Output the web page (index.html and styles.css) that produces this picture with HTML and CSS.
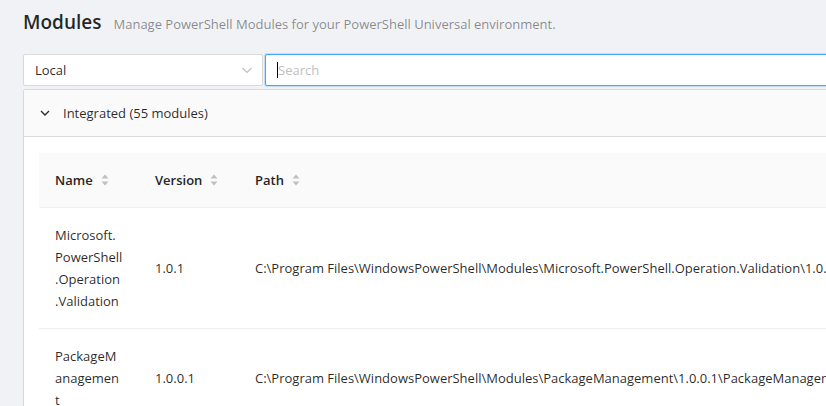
FILE: index.html
```html
<!DOCTYPE html>
<html>
<head>
<meta charset="utf-8">
<link rel="stylesheet" href="styles.css">
</head>
<body>
<div class="page">
  <div class="heading">
    <h1 class="title">Modules</h1>
    <span class="subtitle">Manage PowerShell Modules for your PowerShell Universal environment.</span>
  </div>
  <div class="toolbar">
    <div class="select">
      <span class="select-value">Local</span>
      <svg class="select-arrow" width="12" height="12" viewBox="0 0 12 12"><path d="M1.5 4 L6 8.5 L10.5 4" fill="none" stroke="#bfbfbf" stroke-width="1.1"/></svg>
    </div>
    <div class="search">
      <span class="caret"></span><span class="placeholder">Search</span>
    </div>
  </div>
  <div class="collapse">
    <div class="collapse-header">
      <svg class="collapse-arrow" width="12" height="12" viewBox="0 0 12 12"><path d="M2 4 L6 8 L10 4" fill="none" stroke="#262626" stroke-width="1.3"/></svg>
      <span>Integrated (55 modules)</span>
    </div>
    <div class="collapse-body">
      <table class="table">
        <thead>
          <tr>
            <th class="col-name"><span class="th-inner">Name <svg class="sorter" width="8" height="12" viewBox="0 0 8 12"><path d="M4 0.5 L7.5 4.5 L0.5 4.5 Z M4 11.5 L7.5 7.5 L0.5 7.5 Z" fill="#bfbfbf"/></svg></span></th>
            <th class="col-version"><span class="th-inner">Version <svg class="sorter" width="8" height="12" viewBox="0 0 8 12"><path d="M4 0.5 L7.5 4.5 L0.5 4.5 Z M4 11.5 L7.5 7.5 L0.5 7.5 Z" fill="#bfbfbf"/></svg></span></th>
            <th class="col-path"><span class="th-inner">Path <svg class="sorter" width="8" height="12" viewBox="0 0 8 12"><path d="M4 0.5 L7.5 4.5 L0.5 4.5 Z M4 11.5 L7.5 7.5 L0.5 7.5 Z" fill="#bfbfbf"/></svg></span></th>
          </tr>
        </thead>
        <tbody>
          <tr>
            <td class="col-name">Microsoft.<wbr>PowerShell<wbr>.Operation<wbr>.Validation</td>
            <td class="col-version">1.0.1</td>
            <td class="path">C:\Program Files\WindowsPowerShell\Modules\Microsoft.PowerShell.Operation.Validation\1.0.1\Microsoft.PowerShell.Operation.Validation.psd1</td>
          </tr>
          <tr>
            <td class="col-name">PackageM<wbr>anagemen<br>t</td>
            <td class="col-version">1.0.0.1</td>
            <td class="path">C:\Program Files\WindowsPowerShell\Modules\PackageManagement\1.0.0.1\PackageManagement.psd1</td>
          </tr>
        </tbody>
      </table>
    </div>
  </div>
</div>
</body>
</html>
```
FILE: styles.css
```css
html, body {
  margin: 0;
  padding: 0;
  background: #f0f2f5;
  overflow: hidden;
}
body {
  font-family: "Open Sans", "Noto Sans", sans-serif;
  font-size: 13px;
  color: rgba(0, 0, 0, 0.85);
  width: 826px;
  height: 406px;
}
.page {
  padding: 8px 0 0 23px;
  width: 1200px;
}
.heading {
  display: flex;
  align-items: baseline;
  gap: 12px;
  height: 36px;
}
.title {
  margin: 0;
  font-size: 19px;
  font-weight: 600;
  line-height: 28px;
  color: rgba(0, 0, 0, 0.85);
}
.subtitle {
  font-size: 13px;
  color: rgba(0, 0, 0, 0.45);
}
.toolbar {
  display: flex;
  gap: 2px;
  margin-top: 10px;
  height: 32px;
}
.select {
  height: 30px;
  border: 1px solid #d9d9d9;
  border-radius: 2px;
  background: #fff;
  display: flex;
  align-items: center;
  justify-content: space-between;
  padding: 0 9px 0 11px;
  box-sizing: content-box;
  width: 218px;
}
.select-arrow {
  display: block;
}
.search {
  flex: 1;
  height: 30px;
  border: 1px solid #40a9ff;
  border-radius: 2px;
  background: #fff;
  box-shadow: 0 0 0 1px rgba(24, 144, 255, 0.2);
  display: flex;
  align-items: center;
  padding-left: 11px;
}
.caret {
  width: 1px;
  height: 16px;
  background: #000;
}
.placeholder {
  color: #bfbfbf;
  font-size: 13px;
}
.collapse {
  margin-top: 3px;
  border: 1px solid #d9d9d9;
  border-radius: 2px;
  background: #fafafa;
}
.collapse-header {
  display: flex;
  align-items: center;
  height: 22px;
  padding: 12px 16px 12px 15px;
  gap: 12px;
  line-height: 22px;
}
.collapse-arrow {
  display: block;
}
.collapse-body {
  border-top: 1px solid #d9d9d9;
  background: #fff;
  padding: 16px 15px;
}
.table {
  border-collapse: collapse;
  width: 100%;
  line-height: 22px;
}
.table th {
  background: #fafafa;
  font-weight: 600;
  color: #262626;
  text-align: left;
  padding: 16px;
  border-bottom: 1px solid #f0f0f0;
  white-space: nowrap;
}
.th-inner {
  display: inline-flex;
  align-items: center;
  gap: 8px;
}
.sorter {
  display: block;
}
.table td {
  padding: 16px;
  border-bottom: 1px solid #f0f0f0;
  vertical-align: middle;
}
.table .col-name {
  width: 70px;
  padding-right: 14px;
}
.col-version {
  width: 68px;
}
.path {
  white-space: nowrap;
}
```
